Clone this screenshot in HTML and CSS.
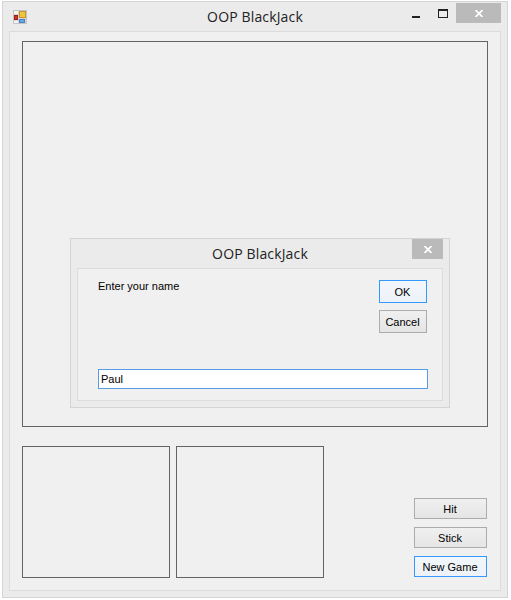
FILE: index.html
```html
<!DOCTYPE html>
<html lang="en">
<head>
  <meta charset="UTF-8">
  <title>OOP BlackJack</title>
  <link rel="stylesheet" href="styles.css">
</head>
<body>
  <div class="window">
    <div class="titlebar">
      <svg class="app-icon" width="14" height="14" viewBox="0 0 14 14">
        <rect x="0.5" y="0.5" width="13" height="13" fill="#d6d6d6" stroke="#c4c4c4"/>
        <rect x="1" y="1" width="4" height="3" fill="#f4f4f4"/>
        <rect x="1" y="11" width="4" height="2" fill="#f4f4f4"/>
        <rect x="6.5" y="1.5" width="6" height="6" fill="#f0c43c" stroke="#c8962a"/>
        <rect x="1.5" y="5.5" width="3" height="4" fill="#d8342a" stroke="#98201a"/>
        <rect x="6.5" y="9.5" width="5" height="3" fill="#6aa6e8" stroke="#4a80c0"/>
      </svg>
      <span class="title">OOP BlackJack</span>
      <div class="controls">
        <span class="min-icon"></span>
        <span class="max-icon"></span>
        <div class="close-btn">
          <svg width="8" height="7" viewBox="0 0 8 7"><path d="M0.5 0 L7.5 7 M7.5 0 L0.5 7" stroke="#fff" stroke-width="1.7" fill="none"/></svg>
        </div>
      </div>
    </div>

    <div class="client">
      <div class="board"></div>
      <div class="bottom">
        <div class="hand"></div>
        <div class="hand"></div>
        <div class="actions">
          <button class="btn action-btn">Hit</button>
          <button class="btn action-btn">Stick</button>
          <button class="btn action-btn focused">New Game</button>
        </div>
      </div>
    </div>

    <!-- Input box over the board -->
    <div class="dialog">
      <div class="dialog-bar">
        <span class="dialog-title">OOP BlackJack</span>
        <div class="dialog-close">
          <svg width="8" height="7" viewBox="0 0 8 7"><path d="M0.5 0 L7.5 7 M7.5 0 L0.5 7" stroke="#fff" stroke-width="1.7" fill="none"/></svg>
        </div>
      </div>
      <div class="dialog-body">
        <div class="prompt-row">
          <span class="prompt">Enter your name</span>
          <div class="dialog-btns">
            <button class="btn dialog-btn focused">OK</button>
            <button class="btn dialog-btn">Cancel</button>
          </div>
        </div>
        <input class="name-input" type="text" value="Paul">
      </div>
    </div>
  </div>
</body>
</html>
```

FILE: styles.css
```css
* {
  box-sizing: border-box;
}
body {
  margin: 0;
  padding: 1px 0 0 2px;
  background: #fff;
  font-family: "Liberation Sans", Arial, sans-serif;
  font-size: 11px;
  color: #000;
}
.window {
  position: relative;
  width: 506px;
  height: 597px;
  padding: 0 6px 6px;
  background: #ebebeb;
  border: 1px solid #d4d4d4;
}

/* Title bar */
.titlebar {
  position: relative;
  display: flex;
  align-items: flex-start;
  height: 29px;
}
.app-icon {
  margin: 8px 0 0 4px;
}
.title {
  position: absolute;
  top: 5px;
  left: 0;
  right: 0;
  text-align: center;
  font-family: "Open Sans", sans-serif;
  font-size: 14px;
  letter-spacing: 0.15px;
  line-height: 20px;
  color: #222;
}
.controls {
  position: relative;
  display: flex;
  align-items: flex-start;
  margin-left: auto;
}
.min-icon {
  width: 8px;
  height: 2px;
  margin-top: 14px;
  margin-right: 18px;
  background: #222;
}
.max-icon {
  width: 10px;
  height: 9px;
  margin-top: 7px;
  margin-right: 8px;
  border: 1px solid #222;
  border-top-width: 2px;
}
.close-btn {
  display: flex;
  align-items: center;
  justify-content: center;
  width: 45px;
  height: 20px;
  margin-top: 1px;
  background: #bababa;
}

/* Client area */
.client {
  height: 560px;
  padding: 9px 12px 12px;
  background: #f0f0f0;
  border: 1px solid #dcdcdc;
}
.board {
  height: 386px;
  border: 1px solid #646464;
}
.bottom {
  display: flex;
  align-items: flex-end;
  gap: 6px;
  margin-top: 19px;
}
.hand {
  width: 148px;
  height: 132px;
  border: 1px solid #646464;
}
.actions {
  display: flex;
  flex-direction: column;
  gap: 8px;
  margin-left: auto;
  margin-right: 1px;
  margin-bottom: 1px;
}

/* Buttons */
.btn {
  padding: 0 1px 0 0;
  background: linear-gradient(#f0f0f0, #e5e5e5);
  border: 1px solid #acacac;
  font-family: "Liberation Sans", Arial, sans-serif;
  font-size: 11px;
  color: #000;
}
.btn.focused {
  background: linear-gradient(#f2f7fb, #ecf2f8);
  border-color: #3399ff;
}
.action-btn {
  width: 73px;
  height: 21px;
}
.dialog-btn {
  width: 48px;
  height: 23px;
}

/* Dialog */
.dialog {
  position: absolute;
  top: 236px;
  left: 67px;
  width: 380px;
  height: 170px;
  padding: 0 6px 6px;
  background: #ebebeb;
  border: 1px solid #d4d4d4;
}
.dialog-bar {
  position: relative;
  display: flex;
  justify-content: flex-end;
  height: 29px;
}
.dialog-title {
  position: absolute;
  top: 5px;
  left: 0;
  right: 0;
  text-align: center;
  font-family: "Open Sans", sans-serif;
  font-size: 14px;
  letter-spacing: 0.15px;
  line-height: 20px;
  color: #222;
}
.dialog-close {
  position: relative;
  display: flex;
  align-items: center;
  justify-content: center;
  width: 31px;
  height: 20px;
  background: #bababa;
}
.dialog-body {
  height: 133px;
  padding: 11px 15px 11px 20px;
  background: #f0f0f0;
  border: 1px solid #dcdcdc;
}
.prompt-row {
  display: flex;
  justify-content: space-between;
  height: 89px;
}
.prompt {
  line-height: 13px;
}
.dialog-btns {
  display: flex;
  flex-direction: column;
  gap: 7px;
}
.name-input {
  display: block;
  width: 330px;
  height: 20px;
  padding: 0 2px;
  background: #fff;
  border: 1px solid #569de5;
  outline: none;
  font-family: "Liberation Sans", Arial, sans-serif;
  font-size: 11px;
  color: #000;
}
```
